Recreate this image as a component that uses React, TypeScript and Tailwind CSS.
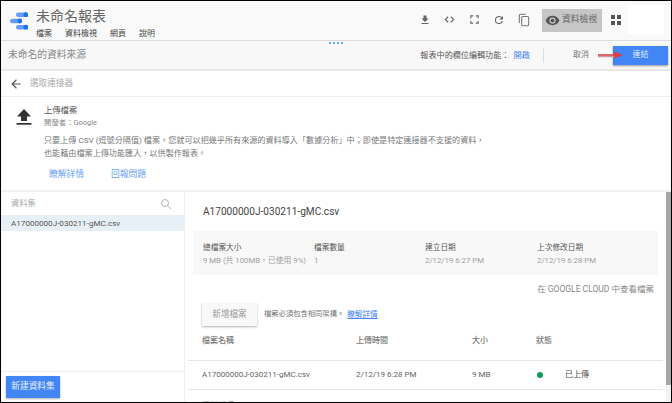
import React from "react";

const font = { fontFamily: '"Roboto","Noto Sans CJK TC",sans-serif' };

function IconBtn({ children }: { children: React.ReactNode }) {
  return <div className="w-[24.6px] h-[20px] flex items-center justify-center">{children}</div>;
}

function Stat({ label, value, cls }: { label: string; value: string; cls: string }) {
  return (
    <div className={cls}>
      <div className="text-[7.7px] leading-[12px] text-[#555]">{label}</div>
      <div className="text-[7.8px] leading-[12px] mt-[1px] text-[#a0a0a0] whitespace-nowrap">{value}</div>
    </div>
  );
}

export default function App() {
  return (
    <div style={font} className="w-[672px] h-[403px] overflow-hidden bg-white flex flex-col border-[1px] border-black relative">
      {/* Top header */}
      <div className="h-[40px] shrink-0 bg-[#f9f9f9] flex items-start border-b border-[#dcdcdc]">
        <svg width="18" height="18" viewBox="0 0 18 18" className="ml-[9px] mt-[11px] shrink-0">
          <rect x="6" y="0.5" width="12" height="4.4" rx="2.2" fill="#669df6" />
          <circle cx="15.8" cy="2.7" r="2.4" fill="#1a73e8" />
          <rect x="0" y="6.8" width="12" height="4.4" rx="2.2" fill="#669df6" />
          <circle cx="9.8" cy="9" r="2.4" fill="#1a73e8" />
          <rect x="6" y="13" width="12" height="4.4" rx="2.2" fill="#669df6" />
          <circle cx="15.8" cy="15.2" r="2.4" fill="#1a73e8" />
        </svg>
        <div className="ml-[8px] mt-[6px] w-[200px]">
          <div className="text-[14px] leading-[18px] text-[#666]">未命名報表</div>
          <div className="flex mt-[4px] text-[8px] leading-[10px] text-[#444] gap-[13px]">
            <span>檔案</span>
            <span>資料檢視</span>
            <span>網頁</span>
            <span>說明</span>
          </div>
        </div>
        <div className="flex-1" />
        <div className="flex items-center mt-[4px] mr-[7px]">
          <IconBtn>
            <svg width="12" height="12" viewBox="0 0 24 24" fill="#666"><path d="M19 9h-4V3H9v6H5l7 7 7-7zM5 18v2h14v-2H5z" /></svg>
          </IconBtn>
          <IconBtn>
            <svg width="11" height="11" viewBox="0 0 24 24" fill="none" stroke="#666" strokeWidth="2.4"><path d="M9 6l-6 6 6 6M15 6l6 6-6 6" /></svg>
          </IconBtn>
          <IconBtn>
            <svg width="11" height="11" viewBox="0 0 24 24" fill="none" stroke="#666" strokeWidth="2.4"><path d="M4 9V4h5M15 4h5v5M20 15v5h-5M9 20H4v-5" /></svg>
          </IconBtn>
          <IconBtn>
            <svg width="12" height="12" viewBox="0 0 24 24" fill="#666"><path d="M17.65 6.35A7.95 7.95 0 0 0 12 4a8 8 0 1 0 7.73 10h-2.08A6 6 0 1 1 12 6c1.66 0 3.14.69 4.22 1.78L13 11h7V4l-2.35 2.35z" /></svg>
          </IconBtn>
          <IconBtn>
            <svg width="14" height="14" viewBox="0 0 24 24" fill="none" stroke="#777" strokeWidth="1.8"><path d="M15 2H6a2 2 0 0 0-2 2v13" /><rect x="8" y="6" width="12" height="16" rx="2" /></svg>
          </IconBtn>
          <div className="ml-[6px] w-[60px] h-[23px] bg-[#c6c6c6] flex items-center justify-start pl-[3px] gap-[2px] mt-[1px]">
            <svg width="15" height="15" viewBox="0 0 24 24" fill="#555" className="shrink-0"><path d="M12 4.5C7 4.5 2.7 7.6 1 12c1.7 4.4 6 7.5 11 7.5s9.3-3.1 11-7.5c-1.7-4.4-6-7.5-11-7.5zM12 17a5 5 0 1 1 0-10 5 5 0 0 1 0 10zm0-8a3 3 0 1 0 0 6 3 3 0 0 0 0-6z" /></svg>
            <span className="text-[8.75px] text-[#666] whitespace-nowrap">資料檢視</span>
          </div>
          <div className="ml-[9px] grid grid-cols-2 gap-[2px] mt-[1px]">
            <div className="w-[4px] h-[4px] bg-[#555]" />
            <div className="w-[4px] h-[4px] bg-[#555]" />
            <div className="w-[4px] h-[4px] bg-[#555]" />
            <div className="w-[4px] h-[4px] bg-[#555]" />
          </div>
          <div className="ml-[7px] w-[36px] h-[29px] bg-white" />
        </div>
      </div>

      {/* Source bar */}
      <div className="h-[30px] shrink-0 bg-[#f8f8f8] flex items-center border-b-[2px] border-[#e8e8e8] relative">
        <div className="absolute left-[328px] top-[1px] flex gap-[2px]">
          <div className="w-[2px] h-[2px] bg-[#6fa8f5]" />
          <div className="w-[2px] h-[2px] bg-[#6fa8f5]" />
          <div className="w-[2px] h-[2px] bg-[#6fa8f5]" />
          <div className="w-[2px] h-[2px] bg-[#6fa8f5]" />
        </div>
        <span className="ml-[7px] text-[9.75px] text-[#888]">未命名的資料來源</span>
        <div className="flex-1" />
        <span className="text-[8.1px] text-[#555]">報表中的欄位編輯功能：</span>
        <span className="text-[8.3px] text-[#4285f4] ml-[4px]">開啟</span>
        <div className="ml-[13px] w-px h-[15px] bg-[#dedede]" />
        <span className="ml-[29px] text-[8px] text-[#777]">取消</span>
        <div className="ml-[24px] mr-[3px] w-[55px] h-[19px] bg-[#4285f4] shadow-[0_1px_2px_rgba(0,0,0,0.4)] flex items-center justify-center text-[8px] text-[#dce8fc] relative">
          連結
          <svg width="28" height="10" viewBox="0 0 28 10" className="absolute left-[-16px] top-[4px] overflow-visible">
            <path d="M1 5.5H21" stroke="#c9a0a0" strokeWidth="1.6" transform="translate(0 1)" />
            <path d="M1 5H21" stroke="#e04444" strokeWidth="1.6" />
            <path d="M17 1.5L26 5l-9 3.5z" fill="#e03c3c" />
          </svg>
        </div>
      </div>

      {/* Back row */}
      <div className="h-[26px] shrink-0 flex items-center border-b-[1px] border-[#efefef]">
        <svg width="14" height="14" viewBox="0 0 24 24" className="ml-[8px]" fill="#555"><path d="M20 11H7.83l5.59-5.59L12 4l-8 8 8 8 1.41-1.41L7.83 13H20v-2z" /></svg>
        <span className="ml-[7px] text-[8.6px] text-[#aaa]">選取連接器</span>
      </div>

      {/* Connector description */}
      <div className="h-[95px] shrink-0 border-b-[2px] border-[#f1f1f1] flex">
        <svg width="18" height="18" viewBox="0 0 18 18" className="ml-[14px] mt-[11px] shrink-0" fill="#333">
          <path d="M9 1L2 8.5h4V13h6V8.5h4z" />
          <rect x="1.5" y="15" width="15" height="1.7" />
        </svg>
        <div className="ml-[11px] mt-[8px] text-[8px]">
          <div className="text-[8.3px] leading-[11px] text-[#555]">上傳檔案</div>
          <div className="text-[7.4px] leading-[11px] mt-[1px] text-[#888]">開發者：Google</div>
          <div className="text-[8.12px] leading-[12.5px] mt-[6px] text-[#777] whitespace-nowrap">
            只要上傳 CSV (逗號分隔值) 檔案，您就可以把幾乎所有來源的資料導入「數據分析」中；即使是特定連接器不支援的資料，
            <br />
            也能藉由檔案上傳功能匯入，以供製作報表。
          </div>
          <div className="flex gap-[27px] ml-[5px] mt-[10px] text-[8.75px] leading-[11px] text-[#6a9ff5]">
            <span>瞭解詳情</span>
            <span>回報問題</span>
          </div>
        </div>
      </div>

      {/* Body */}
      <div className="flex-1 min-h-0 flex">
        {/* Sidebar */}
        <div className="w-[184px] shrink-0 border-r-[1px] border-[#efefef] flex flex-col">
          <div className="h-[23px] flex items-center justify-between pl-[10px] pr-[12px] shrink-0">
            <span className="text-[8.3px] text-[#aaa]">資料集</span>
            <svg width="12" height="12" viewBox="0 0 24 24" fill="none" stroke="#aaa" strokeWidth="1.8"><circle cx="10" cy="10" r="7" /><path d="M15 15l7 7" /></svg>
          </div>
          <div className="h-[16px] shrink-0 bg-[#e8f0f7] flex items-center pl-[10px] text-[8.1px] text-[#555]">A17000000J-030211-gMC.csv</div>
          <div className="flex-1" />
          <div className="h-[31px] shrink-0 border-t-[1px] border-[#efefef] pl-[5px] pt-[4px]">
            <div className="w-[54px] h-[22px] bg-[#4285f4] shadow-[0_1px_2px_rgba(0,0,0,0.3)] flex items-center justify-center text-[8.7px] text-[#e4edfd]">新建資料集</div>
          </div>
        </div>

        {/* Main */}
        <div className="flex-1 min-w-0 relative overflow-hidden">
          <div className="pl-[18px] pt-[13px] text-[10.1px] leading-[14px] text-[#444]">A17000000J-030211-gMC.csv</div>
          <div className="ml-[8px] mt-[12px] mr-[13px] h-[44px] bg-[#f8f8f8] flex items-start pt-[11px]">
            <Stat cls="ml-[10px] w-[111px]" label="總檔案大小" value="9 MB (共 100MB，已使用 9%)" />
            <Stat cls="w-[111px]" label="檔案數量" value="1" />
            <Stat cls="w-[112px]" label="建立日期" value="2/12/19 6:27 PM" />
            <Stat cls="" label="上次修改日期" value="2/12/19 6:28 PM" />
          </div>
          <div className="mt-[8px] pr-[17px] text-right text-[8.5px] leading-[12px] text-[#888]">在 GOOGLE CLOUD 中查看檔案</div>
          <div className="flex items-center ml-[17px] mt-[8px]">
            <div className="w-[55px] h-[23px] bg-[#f8f8f8] shadow-[0_1px_2px_rgba(0,0,0,0.3)] flex items-center justify-center text-[8.6px] text-[#999]">新增檔案</div>
            <span className="ml-[7px] text-[7.3px] text-[#777] whitespace-nowrap">檔案必須包含相同架構。</span>
            <span className="ml-[3px] text-[7.6px] text-[#4285f4] underline">瞭解詳情</span>
          </div>
          <div className="ml-[3px] mr-[8px] h-[35px] pb-[4px] flex items-center border-b-[1px] border-[#e6e6e6] pl-[14px] text-[8px] font-medium text-[#777]">
            <span className="w-[154px]">檔案名稱</span>
            <span className="w-[116px]">上傳時間</span>
            <span className="w-[64px]">大小</span>
            <span>狀態</span>
          </div>
          <div className="ml-[3px] mr-[8px] h-[29px] flex items-center border-b-[1px] border-[#e6e6e6] pl-[14px] text-[8px] text-[#666]">
            <span className="w-[154px]">A17000000J-030211-gMC.csv</span>
            <span className="w-[116px]">2/12/19 6:28 PM</span>
            <span className="w-[64px]">9 MB</span>
            <span className="w-[29px]"><span className="block ml-[1px] w-[6px] h-[6px] rounded-full bg-[#0f9d58]" /></span>
            <span className="text-[#444]">已上傳</span>
          </div>
          <div className="pl-[17px] pt-[10px] text-[8px] leading-[12px] text-[#888]">資料架構</div>
          <div className="absolute right-0 top-0 bottom-0 w-[5px] bg-[#f2f2f2]">
            <div className="w-[5px] h-[193px] bg-[#a6a6a6]" />
          </div>
        </div>
      </div>
    </div>
  );
}
